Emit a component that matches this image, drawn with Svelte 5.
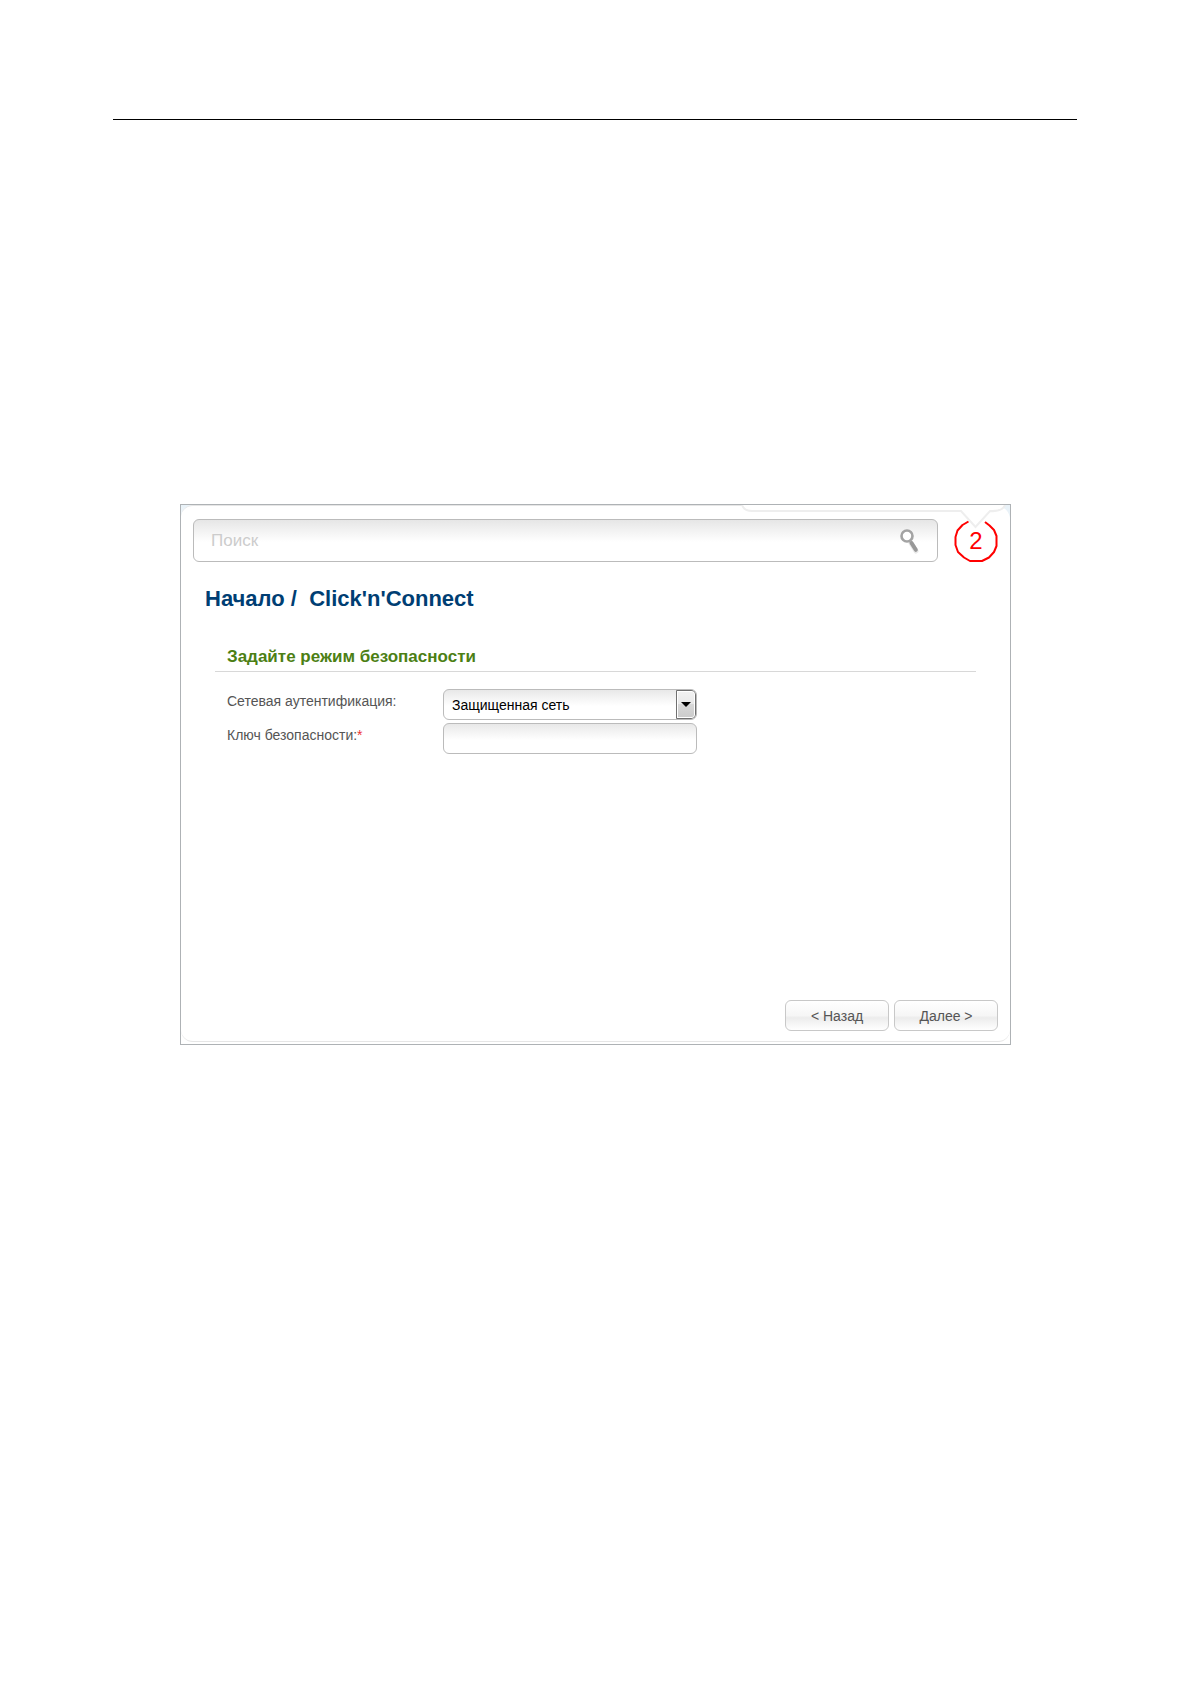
<script>
  let query = "";
  let auth = "secure";
  let key = "";
</script>

<div class="page">
  <hr />

  <main class="frame">
    <div class="panel">
      <form class="topbar" on:submit|preventDefault>
        <div class="search">
          <input type="search" aria-label="Поиск" placeholder="Поиск" bind:value={query} />
          <svg class="lens" viewBox="0 0 22 26" width="22" height="26" aria-hidden="true">
            <path d="M12 15 17 23" stroke="#e8e8e8" stroke-width="5" stroke-linecap="round" />
            <circle cx="8" cy="8" r="5.5" fill="#fff" stroke="#a3a3a3" stroke-width="2.6" />
            <path d="M12.5 15 16.8 21.8" stroke="#989898" stroke-width="4" stroke-linecap="round" />
          </svg>
        </div>
        <div class="badge">
          <svg viewBox="0 0 44 44" width="44" height="44" aria-hidden="true">
            <path
              d="M14.5 2.5 8.5 6 3.5 11.5 1.5 18V26L4 33 10 38.5 16 42H28L35 38.5 40 33 42.5 27V17L40 11 35.5 6.5 31 3"
              fill="none"
              stroke="#f00"
              stroke-width="2"
              stroke-linejoin="round"
            />
          </svg>
          <span>2</span>
        </div>
      </form>

      <h1><a href="#home">Начало</a> /&nbsp; Click'n'Connect</h1>

      <form class="settings" on:submit|preventDefault>
        <h2>Задайте режим безопасности</h2>
        <div class="row">
          <label for="auth">Сетевая аутентификация:</label>
          <div class="select">
            <select id="auth" bind:value={auth}>
              <option value="secure">Защищенная сеть</option>
              <option value="open">Открытая сеть</option>
            </select>
            <span class="arrow"></span>
          </div>
        </div>
        <div class="row">
          <label for="key">Ключ безопасности:<b>*</b></label>
          <input id="key" type="text" bind:value={key} />
        </div>
      </form>

      <div class="actions">
        <button type="button">&lt; Назад</button>
        <button type="button">Далее &gt;</button>
      </div>
    </div>

    <!-- edge of the menu that hangs over the panel -->
    <svg class="flap" viewBox="0 0 270 28" width="270" height="28" aria-hidden="true">
      <path d="M258 0H270V13Q269 4 258 0Z" fill="#e9f2f8" />
      <path
        d="M2 0Q4 6 12 6H221L235.500 22 250 6Q262 7 265 0"
        fill="#fff"
        stroke="#eee"
        stroke-width="2"
      />
    </svg>
  </main>
</div>

<style>
  :global(body) {
    margin: 0;
    background: #fff;
  }
  .page {
    padding: 119px 113px;
    font-family: "Liberation Sans", Arial, sans-serif;
  }
  hr {
    height: 1px;
    margin: 0 0 384px;
    border: 0;
    background: #000;
  }
  .frame {
    position: relative;
    margin: 0 66px 0 67px;
    padding-bottom: 2px;
    border: 1px solid #aeb2b5;
    background: linear-gradient(#e9f2f8, #fff 40px);
  }
  .flap {
    position: absolute;
    top: 0;
    right: 0;
  }
  .panel {
    box-sizing: border-box;
    min-height: 537px;
    display: flex;
    flex-direction: column;
    padding: 13px 12px 10px;
    border: 1px solid #e6e6e6;
    border-width: 1px 0;
    border-radius: 12px;
    background: #fff;
  }
  .topbar {
    display: flex;
    gap: 16px;
  }
  .search {
    flex: 1;
    box-sizing: border-box;
    height: 43px;
    display: flex;
    align-items: center;
    padding: 0 16px 0 17px;
    border: 1px solid #bbb;
    border-radius: 6px;
    background: linear-gradient(#e6e6e6, #fff 22px);
  }
  .search input {
    flex: 1;
    min-width: 0;
    padding: 0;
    border: 0;
    outline: 0;
    background: none;
    font: 17px/24px "Liberation Sans", Arial, sans-serif;
  }
  .search input::placeholder {
    color: #ccc;
  }
  .lens {
    fill: none;
  }
  .badge {
    width: 44px;
    height: 44px;
    display: grid;
  }
  .badge svg,
  .badge span {
    grid-area: 1 / 1;
  }
  .badge span {
    font-size: 24px;
    line-height: 44px;
    text-align: center;
    color: #f00;
  }
  h1 {
    margin: 23px 12px 0;
    font-size: 22px;
    line-height: 26px;
    color: #003e73;
  }
  h1 a {
    color: inherit;
    text-decoration: none;
  }
  .settings {
    margin: 32px 22px 0;
  }
  h2 {
    margin: 0 0 17px;
    padding: 0 12px 1px;
    border-bottom: 1px solid #d8d8d8;
    font-size: 17px;
    line-height: 26px;
    color: #4c7f14;
  }
  .row {
    display: flex;
    margin-bottom: 3px;
    padding-left: 12px;
  }
  label {
    width: 216px;
    font-size: 14px;
    line-height: 24px;
    color: #555;
  }
  label b {
    font-weight: normal;
    color: #e33;
  }
  .select,
  .row input {
    box-sizing: border-box;
    width: 254px;
    height: 31px;
    border: 1px solid #bbb;
    border-radius: 6px;
    background: linear-gradient(#e8e8e8, #fff 16px);
  }
  .select {
    position: relative;
    overflow: hidden;
  }
  select {
    width: 100%;
    height: 29px;
    padding: 0 30px 0 8px;
    border: 0;
    background: none;
    appearance: none;
    font: 14px "Liberation Sans", Arial, sans-serif;
    color: #000;
  }
  .arrow {
    position: absolute;
    top: 0;
    right: 0;
    bottom: 0;
    box-sizing: border-box;
    width: 20px;
    display: flex;
    align-items: center;
    justify-content: center;
    border: 1px solid #707070;
    border-radius: 0 4px 4px 0;
    box-shadow: inset 0 0 0 1px #fff;
    background: linear-gradient(#f2f2f2, #e8e8e8 50%, #d8d8d8 50%, #cbcbcb);
    pointer-events: none;
  }
  .arrow::before {
    content: "";
    border: 5px solid transparent;
    border-top-color: #000;
    border-bottom: 0;
  }
  .row input {
    padding: 0 8px;
    font: 14px "Liberation Sans", Arial, sans-serif;
  }
  .actions {
    display: flex;
    justify-content: flex-end;
    gap: 5px;
    margin-top: auto;
  }
  button {
    width: 104px;
    height: 31px;
    padding: 0;
    border: 1px solid #c8c8c8;
    border-radius: 6px;
    background: linear-gradient(#fff, #f6f6f6 50%, #ececec 58%, #fff);
    font: 14px "Liberation Sans", Arial, sans-serif;
    color: #555;
  }
</style>
